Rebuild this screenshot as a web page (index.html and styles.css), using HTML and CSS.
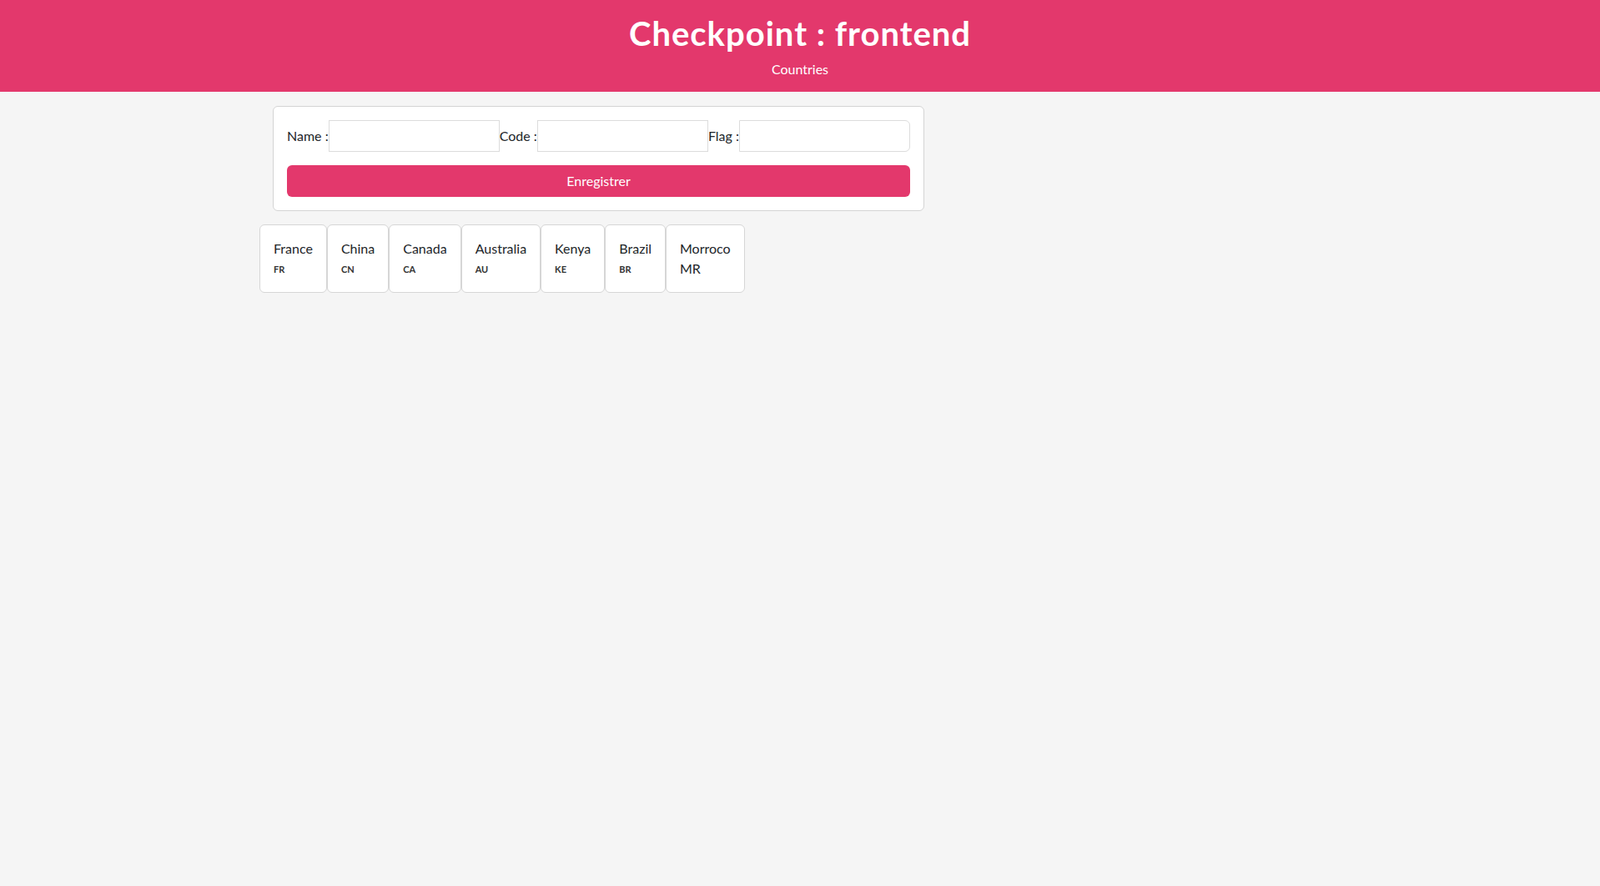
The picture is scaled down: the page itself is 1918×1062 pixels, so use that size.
FILE: index.html
```html
<!DOCTYPE html>
<html lang="fr">
<head>
<meta charset="utf-8">
<title>Checkpoint : frontend</title>
<link rel="stylesheet" href="styles.css">
</head>
<body>
<header class="hero">
  <h1 class="hero-title">Checkpoint : frontend</h1>
  <p class="hero-sub">Countries</p>
</header>
<main class="container">
  <form class="form-card">
    <div class="input-group">
      <label class="group-label" for="name">Name :</label>
      <input class="field" id="name" type="text">
      <label class="group-label" for="code">Code :</label>
      <input class="field" id="code" type="text">
      <label class="group-label" for="flag">Flag :</label>
      <input class="field field-last" id="flag" type="text">
    </div>
    <button class="btn-save" type="button">Enregistrer</button>
  </form>
  <div class="country-list">
    <div class="country-card"><div class="country-name">France</div><div class="country-code">FR</div></div>
    <div class="country-card"><div class="country-name">China</div><div class="country-code">CN</div></div>
    <div class="country-card"><div class="country-name">Canada</div><div class="country-code">CA</div></div>
    <div class="country-card"><div class="country-name">Australia</div><div class="country-code">AU</div></div>
    <div class="country-card"><div class="country-name">Kenya</div><div class="country-code">KE</div></div>
    <div class="country-card"><div class="country-name">Brazil</div><div class="country-code">BR</div></div>
    <div class="country-card"><div class="country-name">Morroco</div><div class="country-plain">MR</div></div>
  </div>
</main>
</body>
</html>
```
FILE: styles.css
```css
* { box-sizing: border-box; }
html, body { margin: 0; padding: 0; }
body {
  background: #f5f5f5;
  color: #212529;
  font-family: "Lato", "Open Sans", sans-serif;
  font-size: 16px;
  line-height: 1.5;
}
.hero {
  background: #e3386c;
  color: #fff;
  text-align: center;
  padding: 16px 0 16px;
}
.hero-title {
  margin: 0 0 7px;
  font-size: 40px;
  font-weight: 700;
  line-height: 48px;
  letter-spacing: 1px;
}
.hero-sub {
  margin: 0;
  font-size: 16px;
  line-height: 23px;
}
.container {
  width: 1296px;
  margin: 0 auto;
  padding-top: 17px;
}
.form-card {
  width: 781px;
  margin-left: 16px;
  background: #fff;
  border: 1px solid #d4d4d4;
  border-radius: 6px;
  padding: 16px;
}
.input-group {
  display: flex;
  align-items: center;
  height: 38px;
}
.group-label {
  white-space: nowrap;
  line-height: 24px;
}
.field {
  flex: 1;
  min-width: 0;
  height: 38px;
  border: 1px solid #dcdcdc;
  background: #fff;
  font: inherit;
  padding: 6px 12px;
  border-radius: 0;
  outline: none;
}
.field-last { border-radius: 0 6px 6px 0; }
.btn-save {
  display: block;
  width: 100%;
  height: 38px;
  margin-top: 16px;
  background: #e3386c;
  color: #fff;
  border: none;
  border-radius: 6px;
  font: inherit;
  cursor: pointer;
}
.country-list {
  display: flex;
  gap: 0;
  margin-top: 16px;
}
.country-card {
  background: #fff;
  border: 1px solid #d6d6d6;
  border-radius: 6px;
  padding: 16px;
}
.country-name {
  font-size: 16px;
  line-height: 24px;
}
.country-code {
  margin-top: 4px;
  font-size: 11px;
  font-weight: 700;
  line-height: 18px;
  color: #333;
}
.country-plain {
  font-size: 16px;
  line-height: 24px;
}
```
